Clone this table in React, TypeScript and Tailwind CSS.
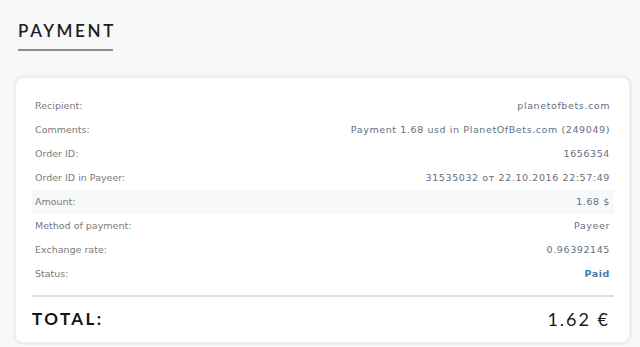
import React from "react";

const rows: { label: string; value: string; hl?: boolean; strong?: boolean }[] = [
  { label: "Recipient:", value: "planetofbets.com" },
  { label: "Comments:", value: "Payment 1.68 usd in PlanetOfBets.com (249049)" },
  { label: "Order ID:", value: "1656354" },
  { label: "Order ID in Payeer:", value: "31535032 от 22.10.2016 22:57:49" },
  { label: "Amount:", value: "1.68 $", hl: true },
  { label: "Method of payment:", value: "Payeer" },
  { label: "Exchange rate:", value: "0.96392145" },
  { label: "Status:", value: "Paid", strong: true },
];

export default function App() {
  return (
    <div className="w-[640px] h-[347px] overflow-hidden bg-[#f8f8f8]">
      <div className="pt-[21px] pl-[18px]">
        <div
          className="text-[17px] leading-[20px] tracking-[2.6px] text-[#1e1e1e] font-semibold"
          style={{ fontFamily: "Lato, 'Open Sans', sans-serif" }}
        >
          PAYMENT
        </div>
        <div className="mt-[8px] w-[95px] h-[2px] bg-[#8c8c8c]" />
      </div>
      <div className="ml-[13px] mt-[24px] w-[619px] h-[270px] border-[3px] border-[#efefef] rounded-[10px] bg-white pl-[16px] pr-[15px] pt-[16px]">
        <div style={{ fontFamily: "'DejaVu Sans', sans-serif" }}>
          {rows.map((r) => (
            <div
              key={r.label}
              className={`flex items-center justify-between h-[24px] pl-[3px] pr-[4px] text-[9.5px] ${r.hl ? "bg-[#f8f8f8]" : ""}`}
            >
              <span className="text-[#7a7a7a]">{r.label}</span>
              <span
                className={
                  r.strong
                    ? "text-[#3f7bad] font-bold tracking-[0.6px]"
                    : "text-[#5f6f82] tracking-[0.6px]"
                }
              >
                {r.value}
              </span>
            </div>
          ))}
        </div>
        <div className="mt-[9px] h-[2px] bg-[#dedede]" />
        <div
          className="flex items-center justify-between h-[44px] pr-[4px]"
          style={{ fontFamily: "Lato, 'Open Sans', sans-serif" }}
        >
          <span className="text-[17px] font-bold tracking-[2.4px] text-[#141414]">TOTAL:</span>
          <span className="text-[18px] font-normal tracking-[2px] text-[#1a1a1a]">1.62 €</span>
        </div>
      </div>
    </div>
  );
}
